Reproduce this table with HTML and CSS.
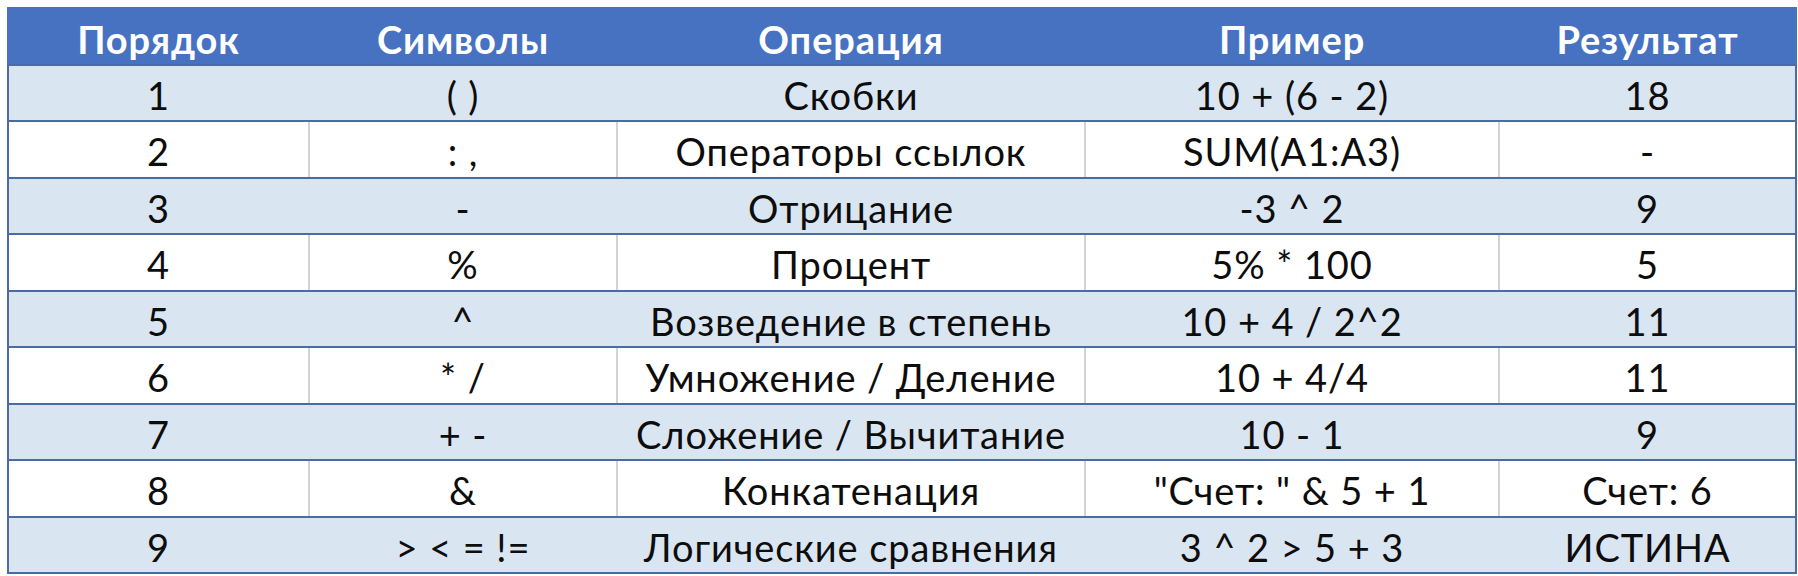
FILE: index.html
```html
<!DOCTYPE html>
<html lang="ru">
<head>
<meta charset="utf-8">
<title>Приоритет операторов</title>
<link rel="stylesheet" href="styles.css">
</head>
<body>
<table class="ops">
  <colgroup>
    <col class="c1"><col class="c2"><col class="c3"><col class="c4"><col class="c5">
  </colgroup>
  <thead>
    <tr class="head"><th>Порядок</th><th>Символы</th><th>Операция</th><th>Пример</th><th>Результат</th></tr>
  </thead>
  <tbody>
    <tr class="odd"><td>1</td><td>( )</td><td>Скобки</td><td>10 + (6 - 2)</td><td>18</td></tr>
    <tr class="even"><td>2</td><td>: ,</td><td>Операторы ссылок</td><td>SUM(A1:A3)</td><td>-</td></tr>
    <tr class="odd"><td>3</td><td>-</td><td>Отрицание</td><td>-3 ^ 2</td><td>9</td></tr>
    <tr class="even"><td>4</td><td>%</td><td>Процент</td><td>5% * 100</td><td>5</td></tr>
    <tr class="odd"><td>5</td><td>^</td><td>Возведение в степень</td><td>10 + 4 / 2^2</td><td>11</td></tr>
    <tr class="even"><td>6</td><td>* /</td><td>Умножение / Деление</td><td>10 + 4/4</td><td>11</td></tr>
    <tr class="odd"><td>7</td><td>+ -</td><td>Сложение / Вычитание</td><td>10 - 1</td><td>9</td></tr>
    <tr class="even"><td>8</td><td>&amp;</td><td>Конкатенация</td><td>"Счет: " &amp; 5 + 1</td><td>Счет: 6</td></tr>
    <tr class="odd"><td>9</td><td>&gt; &lt; = !=</td><td>Логические сравнения</td><td>3 ^ 2 &gt; 5 + 3</td><td>ИСТИНА</td></tr>
  </tbody>
</table>
</body>
</html>
```

FILE: styles.css
```css
html, body {
  margin: 0;
  padding: 0;
  background: #ffffff;
}
body {
  padding: 7px 0 0 7px;
  font-family: Lato, "Open Sans", sans-serif;
}
.ops {
  border-collapse: collapse;
  table-layout: fixed;
  width: 1788px;
  border: 2px solid #4a6ba6;
}
.c1 { width: 301px; }
.c2 { width: 308px; }
.c3 { width: 468px; }
.c4 { width: 414px; }
.c5 { width: 297px; }
.ops tr {
  height: 56.5px;
}
.ops th, .ops td {
  padding: 0;
  text-align: center;
  vertical-align: middle;
  white-space: nowrap;
  line-height: 1;
  letter-spacing: 0.9px;
}
.ops th {
  background: #4672c1;
  color: #ffffff;
  font-weight: 700;
  font-size: 38px;
  border: 2px solid #4672c1;
  border-bottom-color: #4a6ba6;
  padding-top: 6px;
}
.ops td {
  font-size: 38px;
  color: #0d0d0d;
  border-top: 2px solid #4a6ba6;
  border-bottom: 2px solid #4a6ba6;
  padding-top: 4px;
}
.odd td {
  background: #dae5f2;
  border-left: 2px solid #dae5f2;
  border-right: 2px solid #dae5f2;
}
.even td {
  background: #ffffff;
  border-left: 2px solid #d3d3d3;
  border-right: 2px solid #d3d3d3;
}
.ops td:first-child { border-left-color: #4a6ba6; }
.ops td:last-child { border-right-color: #4a6ba6; }
```
